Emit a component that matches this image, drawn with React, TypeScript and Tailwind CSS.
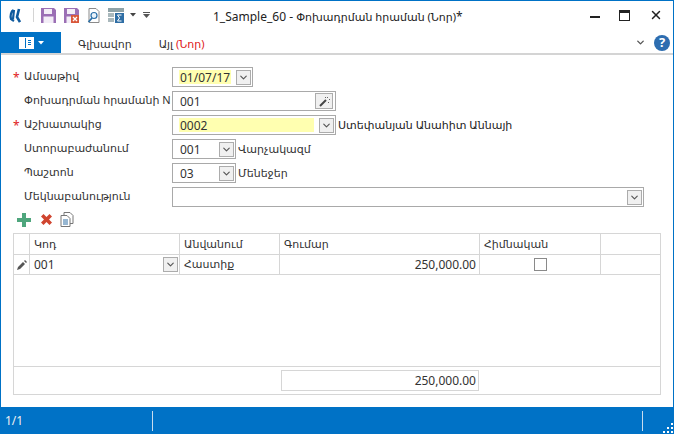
import { ChevronDown, X } from 'lucide-react';

const fieldBorder = 'border border-[#a9a9a9]';

function DropButton({ className = '' }: { className?: string }) {
  return (
    <div className={`w-[15px] h-[15px] shrink-0 border border-[#acacac] bg-[#f0f0f0] flex items-center justify-center ${className}`}>
      <ChevronDown size={11} strokeWidth={2.5} className="text-[#555555]" />
    </div>
  );
}

function FormRow({ label, required, children }: { label: string; required?: boolean; children: React.ReactNode }) {
  return (
    <div className="h-5 flex items-center">
      <div className="w-[159px] shrink-0 flex items-center pb-px">
        <span className="w-[11px] shrink-0 text-[#e02020] text-xs leading-none pt-0.5">{required ? '*' : ''}</span>
        <span className="whitespace-nowrap text-[11px]">{label}</span>
      </div>
      {children}
    </div>
  );
}

function SaveIcon({ cancel }: { cancel?: boolean }) {
  return (
    <svg width="15" height="15" viewBox="0 0 15 15" className="block">
      <path d="M0 0h13l2 2v13H0z" fill="#9b6fb5" />
      <rect x="3" y="1" width="8" height="5" fill="#f3eef7" />
      <rect x="2.500" y="8.500" width="10" height="6.500" fill="#f3eef7" />
      {cancel && (
        <>
          <rect x="7" y="7" width="8" height="8" fill="#d9583b" />
          <path d="M9 9l4 4M13 9l-4 4" stroke="#ffffff" strokeWidth="1.3" />
        </>
      )}
    </svg>
  );
}

function Cell({ className = '', children }: { className?: string; children?: React.ReactNode }) {
  return <div className={`border-r border-[#d6d6d6] flex items-center min-w-0 ${className}`}>{children}</div>;
}

const gridCols = 'grid grid-cols-[16px_150px_100px_200px_121px_1fr]';

export default function App() {
  return (
    <div className="w-[674px] h-[434px] bg-white flex flex-col border-x border-t border-[#0072c6] font-['Noto_Sans','DejaVu_Sans',sans-serif] text-xs text-[#333333] overflow-hidden">
      {/* Title bar */}
      <div className="h-[31px] shrink-0 flex items-center relative pb-[3px]">
        <svg width="12" height="15" viewBox="0 0 12 15" className="ml-[8px]">
          <path d="M4.500 2C2 3 1 8 2 11l3 2M5 2l-1 9" fill="none" stroke="#0f5a9e" strokeWidth="2.200" />
          <path d="M10 1L8 9l3 5" fill="none" stroke="#0f5a9e" strokeWidth="2.600" />
        </svg>
        <div className="w-px h-[14px] bg-[#d4d4d4] ml-[12px]" />
        <div className="ml-[7px]"><SaveIcon /></div>
        <div className="ml-[8px]"><SaveIcon cancel /></div>
        <svg width="13" height="15" viewBox="0 0 13 15" className="ml-[8px]">
          <path d="M2 .5h7l3 3v11H2z" fill="#ffffff" stroke="#8a8a8a" />
          <circle cx="7" cy="7.500" r="3" fill="#eaf3fa" stroke="#2a6fa8" strokeWidth="1.2" />
          <path d="M5 10L1.500 14" stroke="#2a6fa8" strokeWidth="1.8" />
        </svg>
        <svg width="16" height="15" viewBox="0 0 16 15" className="ml-[8px]">
          <rect x="0" y="0" width="16" height="4" fill="#8fa3a8" />
          <rect x="0" y="5" width="6" height="4" fill="#a9b8bc" />
          <rect x="0" y="10" width="6" height="4" fill="#a9b8bc" />
          <rect x="7" y="5" width="9" height="10" fill="#2f6ea5" />
          <path d="M13.500 7h-4l2 3-2 3h4" fill="none" stroke="#ffffff" />
        </svg>
        <svg width="6" height="4" viewBox="0 0 6 4" className="ml-[6px]"><path d="M0 0h6L3 3.500z" fill="#444444" /></svg>
        <svg width="7" height="6" viewBox="0 0 7 6" className="ml-[7px]">
          <rect width="7" height="1" fill="#555555" />
          <path d="M0 2h7L3.500 6z" fill="#555555" />
        </svg>
        <span className="absolute left-[212px] top-[8px] text-[#222222] whitespace-nowrap">
          1_Sample_60 - <span className="text-[11px]">Փոխադրման հրաման (Նոր)</span>*
        </span>
        <div className="ml-auto flex items-center text-[#222222]">
          <div className="w-[10px] h-0.5 bg-[#222222] mt-[3px] mr-[19px]" />
          <div className="w-[11px] h-[11px] border border-[#222222] border-t-[3px] mr-[19px]" />
          <X size={14} strokeWidth={2.5} className="mr-[10px]" />
        </div>
      </div>

      {/* Ribbon tabs */}
      <div className="h-[23px] shrink-0 flex border-b-2 border-[#d4d4d4]">
        <div className="w-[60px] h-[21px] bg-[#0072c6] flex items-center justify-center gap-1">
          <div className="w-[15px] h-3 bg-white border border-white flex">
            <div className="w-[6px] h-full bg-white border-r border-[#0072c6]" />
            <div className="flex-1 flex flex-col justify-center gap-px px-0.5">
              <div className="h-px bg-[#0072c6]" />
              <div className="h-px bg-[#0072c6]" />
              <div className="h-px bg-[#0072c6]" />
            </div>
          </div>
          <svg width="6" height="4" viewBox="0 0 6 4"><path d="M0 0h6L3 3.500z" fill="#ffffff" /></svg>
        </div>
        <span className="ml-[17px] leading-[23px] text-[11px]">Գլխավոր</span>
        <span className="ml-[27px] leading-[23px] text-[11px]">
          Այլ <span className="text-[#e02020]">(Նոր)</span>
        </span>
        <div className="ml-auto flex items-center h-[21px] pr-[3px]">
          <ChevronDown size={11} strokeWidth={3} className="text-[#555555] mr-[8px]" />
          <div className="w-4 h-4 rounded-full bg-[#2d6db0] text-white font-bold text-[13px] leading-none flex items-center justify-center">?</div>
        </div>
      </div>

      {/* Header form */}
      <div className="flex flex-col gap-1 pl-3 pt-3 shrink-0">
        <FormRow label="Ամսաթիվ" required>
          <div className={`w-[81px] h-5 ${fieldBorder} flex items-center pl-[6px] pr-[1px]`}>
            <div className="w-[52px] h-[14px] bg-[#ffffb0] flex items-center pl-[1px] pt-[2px]">01/07/17</div>
            <DropButton className="ml-auto" />
          </div>
        </FormRow>
        <FormRow label="Փոխադրման հրամանի N">
          <div className={`w-[164px] h-5 ${fieldBorder} flex items-center pl-[7px] pr-[2px]`}>
            <span className="pt-px">001</span>
            <div className="ml-auto w-[18px] h-4 border border-[#acacac] bg-[#f0f0f0] flex items-center justify-center">
              <svg width="11" height="11" viewBox="0 0 11 11">
                <path d="M1 10L7 4" stroke="#444444" strokeWidth="2" />
                <path d="M8 1h1v1H8zM10 3h1v1h-1zM6 1h1v1H6zM9 6h1v1H9z" fill="#666666" />
              </svg>
            </div>
          </div>
        </FormRow>
        <FormRow label="Աշխատակից" required>
          <div className={`w-[164px] h-5 ${fieldBorder} flex items-center pl-[6px] pr-[1px]`}>
            <div className="w-[135px] h-[14px] bg-[#ffffb0] flex items-center pl-[1px] pt-[2px]">0002</div>
            <DropButton className="ml-auto" />
          </div>
          <span className="ml-[2px] whitespace-nowrap text-[11px] text-[#222222]">Ստեփանյան Անահիտ Աննայի</span>
        </FormRow>
        <FormRow label="Ստորաբաժանում">
          <div className={`w-[64px] h-5 ${fieldBorder} flex items-center pl-[7px] pr-[1px]`}>
            <span className="pt-px">001</span>
            <DropButton className="ml-auto" />
          </div>
          <span className="ml-[2px] whitespace-nowrap text-[11px]">Վարչակազմ</span>
        </FormRow>
        <FormRow label="Պաշտոն">
          <div className={`w-[64px] h-5 ${fieldBorder} flex items-center pl-[7px] pr-[1px]`}>
            <span className="pt-px">03</span>
            <DropButton className="ml-auto" />
          </div>
          <span className="ml-[2px] whitespace-nowrap text-[11px]">Մենեջեր</span>
        </FormRow>
        <FormRow label="Մեկնաբանություն">
          <div className={`w-[472px] h-5 ${fieldBorder} flex items-center justify-end pr-[1px]`}>
            <DropButton />
          </div>
        </FormRow>
      </div>

      {/* Row actions */}
      <div className="h-[26px] shrink-0 flex items-center pl-4 pb-px">
        <svg width="14" height="14" viewBox="0 0 14 14" className="block">
          <path d="M5 0h4v5h5v4H9v5H5V9H0V5h5z" fill="#4fa67d" />
        </svg>
        <svg width="13" height="13" viewBox="0 0 13 13" className="block ml-[9px]">
          <path d="M1 3.500L3.500 1l3 3 3-3L12 3.500l-3 3 3 3L9.500 12l-3-3-3 3L1 9.500l3-3z" fill="#d0452f" />
        </svg>
        <svg width="14" height="15" viewBox="0 0 14 15" className="block ml-[7px]">
          <path d="M4 .5h6l3 3v8H4z" fill="#ffffff" stroke="#777777" />
          <path d="M1 3.500h6l3 3v8H1z" fill="#ffffff" stroke="#777777" />
          <path d="M3 8h5M3 10h5M3 12h5" stroke="#2f6ea5" />
        </svg>
      </div>

      {/* Lines table */}
      <div className="ml-3 w-[648px] h-[162px] shrink-0 border border-[#d6d6d6] flex flex-col">
        <div className={`${gridCols} h-[21px] shrink-0 border-b border-[#d6d6d6] text-[11px]`}>
          <Cell />
          <Cell className="pl-[4px]">Կոդ</Cell>
          <Cell className="pl-[4px]">Անվանում</Cell>
          <Cell className="pl-[4px]">Գումար</Cell>
          <Cell className="pl-[4px]">Հիմնական</Cell>
          <div />
        </div>
        <div className={`${gridCols} h-5 shrink-0 border-b border-[#d6d6d6]`}>
          <Cell className="justify-center">
            <svg width="10" height="10" viewBox="0 0 10 10">
              <path d="M0 10l1-3 5-5 2 2-5 5zM7 1l1-1 2 2-1 1z" fill="#555555" />
            </svg>
          </Cell>
          <Cell className="pl-[4px] pr-[1px] justify-between">
            <span>001</span>
            <DropButton />
          </Cell>
          <Cell className="pl-[4px] text-[11px]">Հաստիք</Cell>
          <Cell className="justify-end pr-[3px]">250,000.00</Cell>
          <Cell className="justify-center">
            <div className="w-[13px] h-[13px] border border-[#8a8a8a] bg-white" />
          </Cell>
          <div />
        </div>
        <div className="flex-1 border-b border-[#d6d6d6]" />
        <div className="h-[27px] shrink-0 flex items-center">
          <div className="ml-[267px] w-[198px] h-[21px] border border-[#d6d6d6] flex items-center justify-end pr-[2px]">250,000.00</div>
        </div>
      </div>

      {/* Status bar */}
      <div className="mt-auto h-[27px] shrink-0 bg-[#0072c6] -mx-px flex items-center text-[#f0f0f0] relative">
        <span className="ml-[5px] w-[147px]">1/1</span>
        <div className="w-px h-5 bg-[#c8dcee]" />
        <div className="ml-[489px] w-px h-5 bg-[#c8dcee]" />
        <svg width="10" height="10" viewBox="0 0 10 10" className="absolute right-[1px] bottom-[1px]">
          <path d="M8 0h2v2H8zM4 4h2v2H4zM8 4h2v2H8zM0 8h2v2H0zM4 8h2v2H4zM8 8h2v2H8z" fill="#ffffff" />
        </svg>
      </div>
    </div>
  );
}
